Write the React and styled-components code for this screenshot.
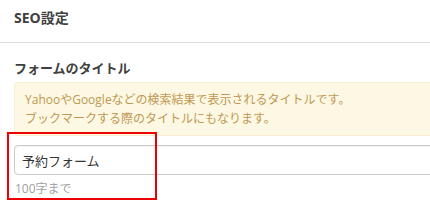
import React from "react";
import styled, { createGlobalStyle } from "styled-components";

const Global = createGlobalStyle`
  html, body { margin: 0; padding: 0; background: #fff; overflow: hidden; }
  body { font-family: "Open Sans", "Noto Sans CJK JP", sans-serif; color: #333; }
  * { box-sizing: border-box; }
`;

const Page = styled.div`
  width: 430px;
  height: 215px;
  overflow: hidden;
`;

const Header = styled.div`
  height: 43px;
  padding: 8px 14px 0;
  border-bottom: 1px solid #dedede;
`;

const HeaderTitle = styled.h2`
  margin: 0;
  font-size: 14px;
  line-height: 20px;
  font-weight: 700;
  color: #404040;
`;

const Section = styled.div`
  padding: 15px 0 0 14px;
  width: 520px;
`;

const Label = styled.div`
  font-size: 13px;
  line-height: 20px;
  font-weight: 700;
  color: #404040;
`;

const Alert = styled.div`
  margin-top: 4px;
  padding: 7px 10px;
  border: 1px solid #fbeed5;
  border-radius: 4px;
  background: #fcf8e3;
  color: #c09853;
  font-size: 12px;
  line-height: 19px;
`;

const Field = styled.div`
  position: relative;
  margin-top: 9px;
`;

const Input = styled.input`
  display: block;
  width: 100%;
  height: 30px;
  padding: 0 7px;
  border: 1px solid #ccc;
  border-radius: 4px;
  box-shadow: inset 0 1px 1px rgba(0, 0, 0, 0.06);
  font-family: "Open Sans", "Noto Sans CJK JP", sans-serif;
  font-size: 13px;
  color: #333;
  background: #fff;
  outline: none;
`;

const Help = styled.div`
  margin-top: 5px;
  padding-left: 1px;
  font-size: 12px;
  line-height: 18px;
  color: #a0a0a0;
`;

const Highlight = styled.div`
  position: absolute;
  left: -7px;
  top: -13px;
  width: 150px;
  height: 68px;
  border: 2px solid #ee0000;
  pointer-events: none;
`;

export default function App() {
  return (
    <Page>
      <Global />
      <Header>
        <HeaderTitle>SEO設定</HeaderTitle>
      </Header>
      <Section>
        <Label>フォームのタイトル</Label>
        <Alert>
          YahooやGoogleなどの検索結果で表示されるタイトルです。
          <br />
          ブックマークする際のタイトルにもなります。
        </Alert>
        <Field>
          <Input defaultValue="予約フォーム" readOnly />
          <Help>100字まで</Help>
          <Highlight />
        </Field>
      </Section>
    </Page>
  );
}
